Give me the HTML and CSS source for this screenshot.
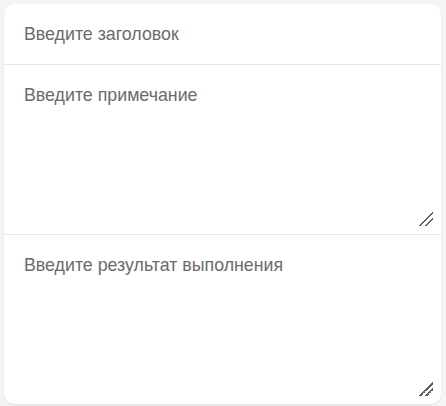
FILE: index.html
```html
<!DOCTYPE html>
<html>
<head>
    <meta charset="utf-8">
    <title>Новая задача</title>
    <link rel="stylesheet" href="styles.css">
</head>
<body>
    <form class="task-card">
        <div class="task-section">
            <input type="text" class="task-title" placeholder="Введите заголовок">
        </div>
        <div class="task-section">
            <textarea class="task-field" placeholder="Введите примечание"></textarea>
        </div>
        <div class="task-section last">
            <textarea class="task-field" placeholder="Введите результат выполнения"></textarea>
        </div>
    </form>
</body>
</html>
```

FILE: styles.css
```css
body {
    font-family: "Liberation Sans", Arial, sans-serif;
    background-color: #f3f4f6;
    margin: 0;
    padding: 4px 5px 2px 4px;
}

.task-card {
    background-color: #fff;
    border-radius: 10px;
    box-shadow: 0 1px 2px rgba(0, 0, 0, 0.08);
    overflow: hidden;
    margin: 0;
}

.task-section {
    padding: 8px;
    border-bottom: 1px solid #e5e7eb;
}

.task-section.last {
    border-bottom: none;
}

.task-title,
.task-field {
    display: block;
    width: 100%;
    box-sizing: border-box;
    border: none;
    background: transparent;
    font-family: "Liberation Sans", Arial, sans-serif;
    font-size: 17.8px;
    color: #333;
    outline: none;
    margin: 0;
    padding: 12px;
}

.task-title {
    height: 44px;
}

.task-field {
    height: 153px;
    resize: vertical;
}

.task-field::-webkit-resizer {
    background: linear-gradient(135deg, transparent 0 52%, #5f5f5f 52% 60%, transparent 60% 72%, #5f5f5f 72% 80%, transparent 80%);
}

::placeholder {
    color: #6b6b6b;
}
```
